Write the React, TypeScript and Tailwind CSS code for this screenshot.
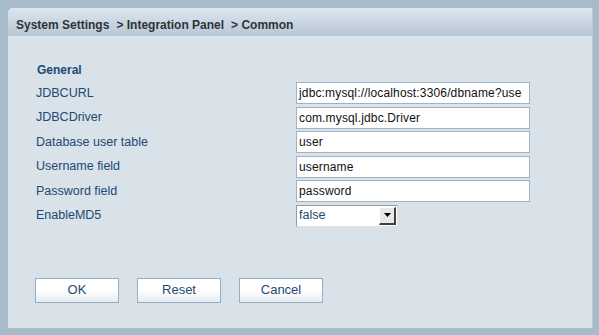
import React from 'react';

const fields = [
    { label: 'JDBCURL', value: 'jdbc:mysql://localhost:3306/dbname?use' },
    { label: 'JDBCDriver', value: 'com.mysql.jdbc.Driver' },
    { label: 'Database user table', value: 'user' },
    { label: 'Username field', value: 'username' },
    { label: 'Password field', value: 'password' },
];

const font = { fontFamily: '"Liberation Sans", Arial, sans-serif' };

const Button = ({ children }: { children: React.ReactNode }) => (
    <button className="w-[84px] h-[25px] border border-[#95adc4] bg-gradient-to-b from-white via-white to-[#e6ebf0] text-[13px] text-[#1d4a74]">
        {children}
    </button>
);

export default function App() {
    return (
        <div className="w-[599px] h-[335px] bg-[#a8bbca] pt-2 pl-2" style={font}>
            <div className="w-[585px] h-[320px] bg-[#d9e1e9] rounded-tl-[5px] border-r border-[#bccbd7] flex flex-col">
                {/* Header */}
                <div className="h-[28px] rounded-tl-[5px] bg-gradient-to-b from-[#dde6ee] to-[#b7c7d5] flex items-center pl-2 pt-[5px] text-[12px] font-bold text-[#2e3338]">
                    <span>System Settings</span>
                    <span className="ml-[7px]">&gt; Integration Panel</span>
                    <span className="ml-[7px]">&gt; Common</span>
                </div>

                {/* Form */}
                <div className="flex-1 flex flex-col pl-[28px] pt-[27px]">
                    <div className="h-[14px] leading-[14px] text-[12px] font-bold text-[#1d4a74] pl-px">General</div>
                    <div className="flex flex-col gap-[2.5px] mt-[5px]">
                        {fields.map((f) => (
                            <div key={f.label} className="flex items-center h-[22px]">
                                <span className="w-[260px] text-[12.5px] text-[#1d4a74]">{f.label}</span>
                                <div className="w-[234px] h-[22px] bg-white border border-[#9db3c7] pl-[2px] flex items-center overflow-hidden">
                                    <span className="whitespace-nowrap text-[12px] tracking-[0.15px] text-[#111]">{f.value}</span>
                                </div>
                            </div>
                        ))}
                        <div className="flex items-center h-[22px]">
                            <span className="w-[260px] text-[12.5px] text-[#1d4a74]">EnableMD5</span>
                            <div className="w-[102px] h-[22px] bg-white border-t border-l border-[#9a9a9a] border-b border-b-[#e0e0e0] border-r border-r-[#e0e0e0] flex items-center">
                                <span className="flex-1 pl-[2px] text-[12.5px] text-[#1d4a74]">false</span>
                                <div className="w-[17px] h-[18px] mr-px bg-[#e8e8e8] border-t border-l border-t-white border-l-white border-b-2 border-r-2 border-b-[#404040] border-r-[#404040] flex items-center justify-center">
                                    <svg width="7" height="4" viewBox="0 0 7 4">
                                        <path d="M0 0h7L3.5 4z" fill="#000" />
                                    </svg>
                                </div>
                            </div>
                        </div>
                    </div>

                    <div className="flex gap-[18px] mt-[51px] -ml-px">
                        <Button>OK</Button>
                        <Button>Reset</Button>
                        <Button>Cancel</Button>
                    </div>
                </div>
            </div>
        </div>
    );
}
